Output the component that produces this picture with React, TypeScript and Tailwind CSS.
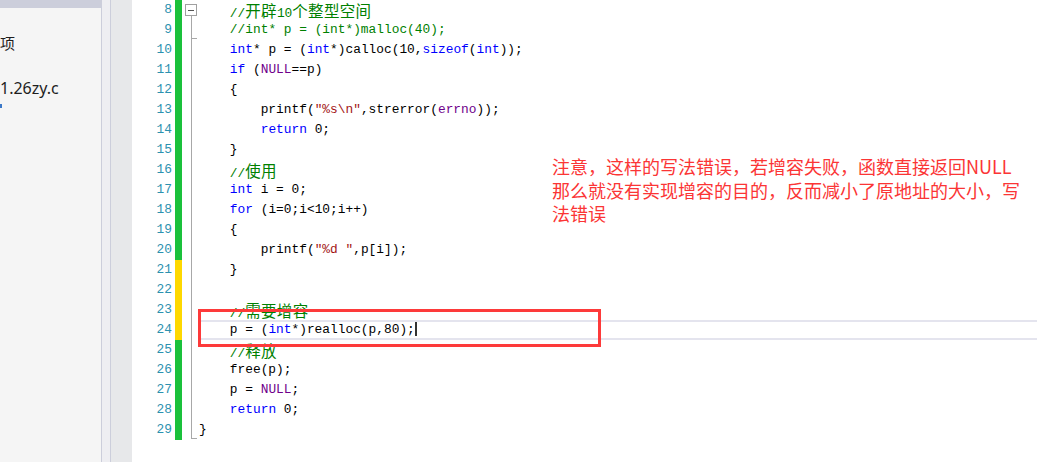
type Tok = [string, string?];

const C = {
  kw: "text-[#0000ff]",
  cm: "text-[#008000]",
  str: "text-[#a31515]",
  mac: "text-[#6f008a]",
};

const lines: { n: number; bar: "g" | "y"; toks: Tok[] }[] = [
  { n: 8, bar: "g", toks: [["    "], ["//", C.cm], ["开辟", "cjk " + C.cm], ["10", C.cm], ["个整型空间", "cjk " + C.cm]] },
  { n: 9, bar: "g", toks: [["    "], ["//int* p = (int*)malloc(40);", C.cm]] },
  { n: 10, bar: "g", toks: [["    "], ["int", C.kw], ["* p = ("], ["int", C.kw], ["*)calloc(10,"], ["sizeof", C.kw], ["("], ["int", C.kw], ["));"]] },
  { n: 11, bar: "g", toks: [["    "], ["if", C.kw], [" ("], ["NULL", C.mac], ["==p)"]] },
  { n: 12, bar: "g", toks: [["    {"]] },
  { n: 13, bar: "g", toks: [["        printf("], ["\"%s\\n\"", C.str], [",strerror("], ["errno", C.mac], ["));"]] },
  { n: 14, bar: "g", toks: [["        "], ["return", C.kw], [" 0;"]] },
  { n: 15, bar: "g", toks: [["    }"]] },
  { n: 16, bar: "g", toks: [["    "], ["//", C.cm], ["使用", "cjk " + C.cm]] },
  { n: 17, bar: "g", toks: [["    "], ["int", C.kw], [" i = 0;"]] },
  { n: 18, bar: "g", toks: [["    "], ["for", C.kw], [" (i=0;i<10;i++)"]] },
  { n: 19, bar: "g", toks: [["    {"]] },
  { n: 20, bar: "g", toks: [["        printf("], ["\"%d \"", C.str], [",p[i]);"]] },
  { n: 21, bar: "y", toks: [["    }"]] },
  { n: 22, bar: "y", toks: [[""]] },
  { n: 23, bar: "y", toks: [["    "], ["//", C.cm], ["需要增容", "cjk " + C.cm]] },
  { n: 24, bar: "y", toks: [["    p = ("], ["int", C.kw], ["*)realloc(p,80);"]] },
  { n: 25, bar: "g", toks: [["    "], ["//", C.cm], ["释放", "cjk " + C.cm]] },
  { n: 26, bar: "g", toks: [["    free(p);"]] },
  { n: 27, bar: "g", toks: [["    p = "], ["NULL", C.mac], [";"]] },
  { n: 28, bar: "g", toks: [["    "], ["return", C.kw], [" 0;"]] },
  { n: 29, bar: "g", toks: [["}"]] },
];

const Token = ({ t }: { t: Tok }) => {
  const cls = t[1] || "text-black";
  if (cls.startsWith("cjk")) {
    return (
      <span className={`${cls.slice(4)} font-['Noto_Sans_CJK_SC',sans-serif] text-[15.5px] leading-[20px] tracking-[0.3px]`}>
        {t[0]}
      </span>
    );
  }
  return <span className={cls}>{t[0]}</span>;
};

const Editor = () => (
  <div className="relative flex-1 bg-white h-full">
    {lines.map((l) => (
      <div key={l.n} className="flex h-[20px] leading-[20px]">
        <div className="w-[43px] pr-[3px] text-right text-[#2b91af]">{l.n}</div>
        <div className={`w-[7px] ${l.bar === "g" ? "bg-[#1ac13b]" : "bg-[#fed800]"}`} />
        <div className="relative w-[17px]">
          {l.n === 8 && (
            <div className="absolute left-[3px] top-[4px] w-[12px] h-[12px] border border-[#a0a0a0] bg-white flex items-center justify-center">
              <div className="w-[6px] h-[1px] bg-[#555]" />
            </div>
          )}
          <div
            className={`absolute left-[9px] w-px bg-[#a8a8a8] ${
              l.n === 8 ? "top-[16px] bottom-0" : l.n === 29 ? "top-0 bottom-[1px]" : "top-0 bottom-0"
            }`}
          />
          {(l.n === 9 || l.n === 29) && (
            <div className="absolute left-[9px] bottom-[1px] w-[6px] h-px bg-[#a8a8a8]" />
          )}
        </div>
        <div
          className={`relative flex-1 whitespace-pre ${
            l.n === 24 ? "border-y-2 border-[#e4e4ee] leading-[16px]" : ""
          }`}
        >
          {l.toks.map((t, i) => (
            <Token key={i} t={t} />
          ))}
          {l.n === 24 && <span className="inline-block align-middle w-[2px] h-[14px] bg-[#333] -mt-[2px]" />}
        </div>
      </div>
    ))}

    {/* annotation overlay */}
    <div className="absolute left-[66px] top-[309px] w-[403px] h-[38px] border-[3px] border-[#fd3a3a]" />
    <div className="absolute left-[420px] top-[155px] font-['Noto_Sans_CJK_SC',sans-serif] text-[18px] leading-[23.5px] text-[#fb3535]">
      <div>注意，这样的写法错误，若增容失败，函数直接返回NULL</div>
      <div>那么就没有实现增容的目的，反而减小了原地址的大小，写</div>
      <div>法错误</div>
    </div>
  </div>
);

export default function App() {
  return (
    <div className="flex w-[1037px] h-[462px] overflow-hidden font-['Liberation_Mono',monospace] text-[12.85px]">
      <div className="w-[101px] h-full bg-[#f5f5f5] flex flex-col font-['Noto_Sans','Noto_Sans_CJK_SC',sans-serif]">
        <div className="h-[8px] bg-[#cccedb]" />
        <div className="pt-[25px] text-[15px] leading-[20px] text-[#1e1e1e] whitespace-nowrap">
          <div>项</div>
          <div className="mt-[25px] text-[16px]">1.26zy.c</div>
          <div className="mt-[6px] w-[2px] h-[4px] bg-[#3c78c8]" />
        </div>
      </div>
      <div className="w-px h-full bg-[#cccedb]" />
      <div className="w-[8px] h-full bg-[#eeeef2]" />
      <div className="w-px h-full bg-[#cccedb]" />
      <div className="w-[21px] h-full bg-[#e7e8ea]" />
      <Editor />
    </div>
  );
}
